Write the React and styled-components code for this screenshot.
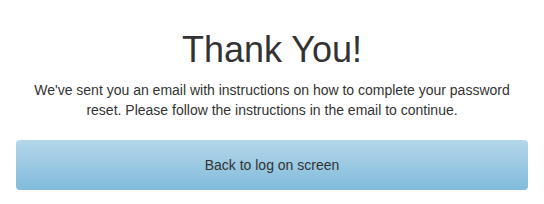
import React from 'react';
import styled, { createGlobalStyle } from 'styled-components';

const GlobalStyle = createGlobalStyle`
  body {
    margin: 0;
    background: #fff;
    font-family: 'Liberation Sans', Arial, sans-serif;
    color: #333;
  }
`;

const Wrapper = styled.div`
  padding: 30px 16px 0;
  display: flex;
  flex-direction: column;
  align-items: stretch;
  text-align: center;
`;

const Title = styled.h1`
  margin: 0;
  font-size: 36px;
  line-height: 40px;
  font-weight: 400;
  color: #333;
`;

const Message = styled.p`
  margin: 10px 0 0;
  padding: 0 10px;
  font-size: 14px;
  line-height: 20px;
  color: #333;
`;

const Button = styled.button`
  margin-top: 20px;
  height: 50px;
  border: 0;
  border-radius: 4px;
  background: linear-gradient(to bottom, #b4d7ea 0%, #81bbdb 100%);
  font-family: 'Liberation Sans', Arial, sans-serif;
  font-size: 14px;
  color: #333;
  cursor: pointer;
`;

const App = () => (
  <>
    <GlobalStyle />
    <Wrapper>
      <Title>Thank You!</Title>
      <Message>
        We&apos;ve sent you an email with instructions on how to complete your password
        reset. Please follow the instructions in the email to continue.
      </Message>
      <Button type="button">Back to log on screen</Button>
    </Wrapper>
  </>
);

export default App;
